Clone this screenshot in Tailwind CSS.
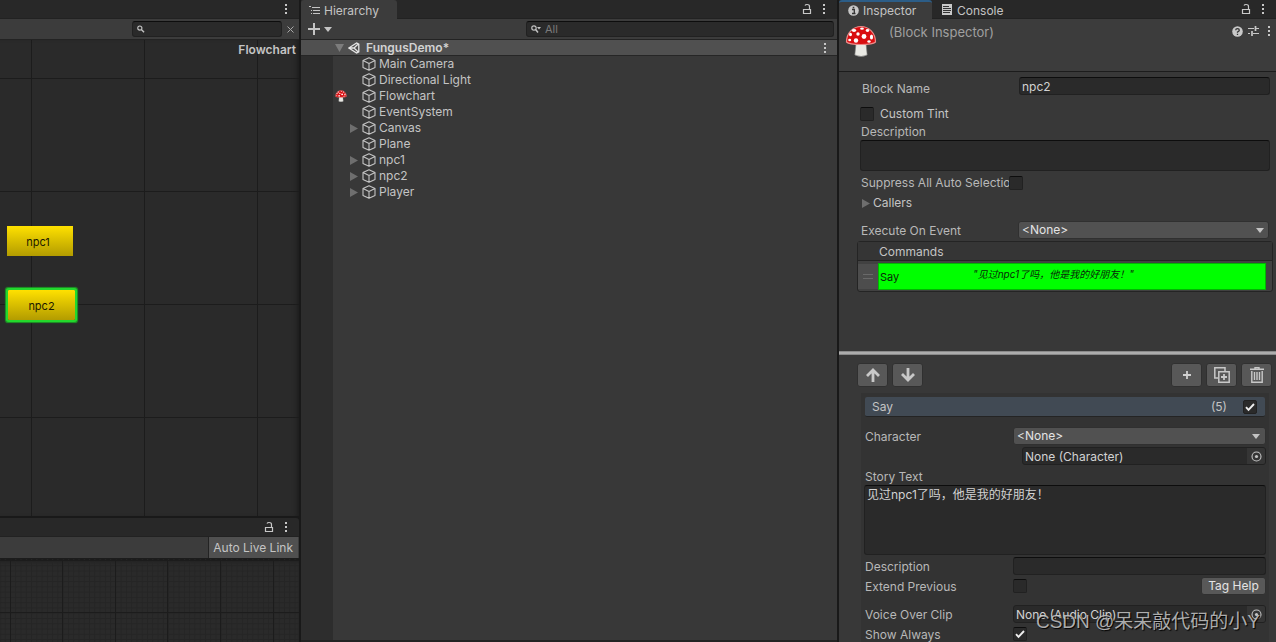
<!DOCTYPE html>
<html lang="en">
<head>
<meta charset="utf-8">
<title>FungusDemo</title>
<script src="https://cdn.jsdelivr.net/npm/@tailwindcss/browser@4"></script>
</head>
<body class="h-screen overflow-hidden bg-[#191919] font-['Inter','Noto_Sans_CJK_SC',sans-serif] text-[12px] leading-4 text-[#c4c4c4]">
<svg class="hidden">
  <symbol id="dots" viewBox="0 0 4 12"><path d="M1 1h2v2H1zM1 5h2v2H1zM1 9h2v2H1z" fill="#c8c8c8"/></symbol>
  <symbol id="lock" viewBox="0 0 10 12"><path d="M1.500 6.500h7v4h-7zM7.500 6V3.500Q7.500 1.500 5 1.500Q3.500 1.500 3 2.500" fill="none" stroke="#c8c8c8" stroke-width="1.200"/></symbol>
  <symbol id="cube" viewBox="0 0 14 14"><path d="M7 .8 13 3.600V10.400L7 13.300 1 10.400V3.600ZM1 3.600 7 6.500 13 3.600M7 6.500V13.300" fill="none" stroke="#c4c4c4" stroke-width="1.100" stroke-linejoin="round"/></symbol>
  <symbol id="right" viewBox="0 0 8 9"><path d="M0 0 8 4.500 0 9Z" fill="#6e6e6e"/></symbol>
  <symbol id="down" viewBox="0 0 8 5"><path d="M0 0H8L4 5Z" fill="#c4c4c4"/></symbol>
  <symbol id="mushroom" viewBox="0 0 32 32">
    <path d="M11 18h10l1.200 12q-6 3-12.400 0z" fill="#e9e9e4" stroke="#777" stroke-width=".6"/>
    <path d="M1.500 17C1.500 8 8 1.500 16 1.500S30.500 8 30.500 17Q28 19.500 16 19.500T1.500 17Z" fill="#d90d10" stroke="#ee8a88" stroke-width="1.200"/>
    <g fill="#fff"><ellipse cx="9" cy="5.500" rx="2.200" ry="1.400"/><ellipse cx="17" cy="3.700" rx="1.900" ry="1.100"/><ellipse cx="22.500" cy="5.500" rx="1.800" ry="1.400"/><circle cx="13" cy="9" r="1.700"/><circle cx="19" cy="11.500" r="2.400"/><ellipse cx="26.500" cy="12" rx="1.600" ry="2.500"/><ellipse cx="5.500" cy="9.500" rx="1.500" ry="1.800"/><circle cx="11" cy="15.500" r="2.200"/><ellipse cx="4.700" cy="15" rx="1.500" ry="1.300"/><ellipse cx="24" cy="16.500" rx="1.700" ry="1.200"/></g>
  </symbol>
  <symbol id="target" viewBox="0 0 11 11"><circle cx="5.500" cy="5.500" r="4.500" fill="none" stroke="#c4c4c4" stroke-width="1.100"/><circle cx="5.500" cy="5.500" r="1.600" fill="#c4c4c4"/></symbol>
  <symbol id="check" viewBox="0 0 14 14"><path d="M3 7.200 5.500 9.800 11 4" fill="none" stroke="#eee" stroke-width="1.900"/></symbol>
</svg>

<div class="grid h-full grid-cols-[299fr_536fr_437fr] gap-[2px]">

  <!-- Flowchart window and animator window -->
  <section class="flex min-w-0 flex-col">
    <header class="flex h-[19px] shrink-0 items-center justify-end border-b border-[#222] bg-[#282828] pr-[11px]">
      <button aria-label="Window menu"><svg class="h-3 w-1"><use href="#dots"/></svg></button>
    </header>
    <div class="flex h-[21px] shrink-0 items-center justify-end border-b border-[#232323] bg-[#3c3c3c] pr-[5px]">
      <label class="flex h-4 w-[150px] items-center rounded-[3px] border border-[#212121] border-t-[#0d0d0d] bg-[#2a2a2a] pl-1">
        <svg class="h-2 w-2" viewBox="0 0 8 8"><circle cx="3" cy="3" r="2.200" fill="none" stroke="#c4c4c4" stroke-width="1.200"/><path d="M4.600 4.600 7.500 7.500" stroke="#c4c4c4" stroke-width="1.500"/></svg>
        <input class="w-full min-w-0 bg-transparent px-1 outline-none" aria-label="Search blocks">
      </label>
      <button class="ml-[5px]" aria-label="Clear search"><svg class="h-[7px] w-[7px]" viewBox="0 0 7 7"><path d="M.5.5 6.500 6.500M6.500.5.5 6.500" stroke="#a8a8a8"/></svg></button>
    </div>
    <div class="relative min-h-0 flex-1 overflow-hidden bg-[#2a2a2a] bg-[linear-gradient(to_right,#1c1c1c_1px,transparent_1px),linear-gradient(to_bottom,#1c1c1c_1px,transparent_1px)] bg-[size:113px_113px] bg-[position:31px_38px] shadow-[inset_-5px_0_5px_-3px_#1d1d1d]">
      <h2 class="pt-[2px] pr-[3px] text-right font-semibold">Flowchart</h2>
      <div class="absolute top-[186px] left-[7px] flex h-[30px] w-[66px] items-center justify-center bg-linear-to-b from-[#ffe100] to-[#b39c00] pt-[2px] pr-1 text-[11px] text-[#1c1900]">npc1</div>
      <div class="absolute top-[250px] left-2 flex h-[30px] w-[67px] items-center justify-center rounded-[1px] bg-linear-to-b from-[#ffe100] to-[#b39c00] pt-[2px] text-[11px] text-[#1c1900] shadow-[0_0_0_2px_#23d82c,0_0_1px_3px_#1c9a25]">npc2</div>
    </div>
    <div class="h-[2px] shrink-0 bg-[#191919]"></div>
    <header class="flex h-[19px] shrink-0 items-center justify-end gap-[10px] rounded-tr-[3px] border-b border-[#222] bg-[#282828] pr-[11px]">
      <button aria-label="Lock"><svg class="h-3 w-[10px]"><use href="#lock"/></svg></button>
      <button aria-label="Window menu"><svg class="h-3 w-1"><use href="#dots"/></svg></button>
    </header>
    <div class="flex h-[22px] shrink-0 justify-end border-b border-[#1c1c1c] bg-[#3c3c3c] pr-px">
      <button class="border-l border-[#232323] bg-[#505050] pr-[5px] pl-1">Auto Live Link</button>
    </div>
    <div class="h-[83px] shrink-0 overflow-hidden bg-[#2a2a2a] shadow-[inset_0_4px_4px_-3px_#111]">
      <svg class="h-full w-full">
        <defs><pattern id="fine" x="10" y="1" width="5.270" height="5.270" patternUnits="userSpaceOnUse"><path d="M.5 0V5.270M0 .5H5.270" stroke="#252525"/></pattern></defs>
        <rect width="100%" height="100%" fill="url(#fine)"/>
        <path d="M10.500 0V90M62.500 0V90M115.500 0V90M167.500 0V90M220.500 0V90M273.500 0V90M0 1.500H320M0 53.500H320" stroke="#1c1c1c"/>
      </svg>
    </div>
  </section>

  <!-- Hierarchy window -->
  <section class="flex min-w-0 flex-col bg-[#383838]">
    <header class="flex h-[19px] shrink-0 items-center bg-[#282828] pr-[11px]">
      <div class="flex h-full w-24 items-center gap-1 rounded-t-[3px] bg-[#3c3c3c] pt-[2px] pl-2">
        <svg class="h-[9px] w-[11px]" viewBox="0 0 11 9"><path d="M0 .5h2M3 1.500h8M2 4.500h1M4 4.500h7M2 7.500h1M4 7.500h7" stroke="#c4c4c4"/></svg>
        <h2>Hierarchy</h2>
      </div>
      <div class="flex h-full flex-1 items-center justify-end gap-[10px] border-b border-[#222]">
        <button aria-label="Lock"><svg class="h-3 w-[10px]"><use href="#lock"/></svg></button>
        <button aria-label="Window menu"><svg class="h-3 w-1"><use href="#dots"/></svg></button>
      </div>
    </header>
    <div class="flex h-[21px] shrink-0 items-center border-b border-[#232323] bg-[#3c3c3c] pr-[3px] pl-[7px]">
      <button class="flex items-center gap-1" aria-label="Create">
        <svg class="h-3 w-3" viewBox="0 0 12 12"><path d="M6 0V12M0 6H12" stroke="#c4c4c4" stroke-width="2"/></svg>
        <svg class="h-[5px] w-2"><use href="#down"/></svg>
      </button>
      <label class="ml-auto flex h-4 w-[308px] items-center gap-1 rounded-[3px] border border-[#212121] border-t-[#0d0d0d] bg-[#2a2a2a] pl-1">
        <svg class="h-2 w-[10px] shrink-0" viewBox="0 0 10 8"><circle cx="3" cy="3" r="2.200" fill="none" stroke="#c4c4c4" stroke-width="1.200"/><path d="M4.600 4.600 7 7.500" stroke="#c4c4c4" stroke-width="1.500"/><path d="M6 2h4L8 4.500z" fill="#c4c4c4"/></svg>
        <input class="w-full min-w-0 bg-transparent text-[11px] outline-none placeholder:text-[#7a7a7a]" placeholder="All" aria-label="Search hierarchy">
      </label>
    </div>
    <div class="flex h-4 shrink-0 items-center border-b border-[#262626] bg-[#505050] pr-[10px] pl-[34px]">
      <svg class="h-2 w-[9px]" viewBox="0 0 9 8"><path d="M0 0H9L4.500 8Z" fill="#7c7c7c"/></svg>
      <svg class="ml-1 h-3 w-3" viewBox="0 0 12 12"><path d="M.8 6 8.600 1 10.800 2.200V9.800L8.600 11ZM.8 6H6M6 6 10.500 1.800M6 6 10.500 10.200" fill="none" stroke="#e6e6e6" stroke-width="1.300"/></svg>
      <h3 class="ml-[6px] font-semibold text-[#d2d2d2]">FungusDemo*</h3>
      <button class="ml-auto" aria-label="Scene menu"><svg class="h-3 w-1"><use href="#dots"/></svg></button>
    </div>
    <div class="min-h-0 flex-1 border-b-2 border-[#232323] bg-linear-to-r from-[#2d2d2d] from-[32px] to-[#383838] to-[32px]">
      <ul>
        <li class="flex h-4 items-center gap-[3px] pl-[61px]"><svg class="h-[14px] w-[14px]"><use href="#cube"/></svg>Main Camera</li>
        <li class="flex h-4 items-center gap-[3px] pl-[61px]"><svg class="h-[14px] w-[14px]"><use href="#cube"/></svg>Directional Light</li>
        <li class="flex h-4 items-center gap-[3px] pl-[34px]"><svg class="mr-3 h-3 w-3"><use href="#mushroom"/></svg><svg class="h-[14px] w-[14px]"><use href="#cube"/></svg>Flowchart</li>
        <li class="flex h-4 items-center gap-[3px] pl-[61px]"><svg class="h-[14px] w-[14px]"><use href="#cube"/></svg>EventSystem</li>
        <li class="flex h-4 items-center gap-[3px] pl-[49px]"><svg class="mr-px h-[9px] w-2"><use href="#right"/></svg><svg class="h-[14px] w-[14px]"><use href="#cube"/></svg>Canvas</li>
        <li class="flex h-4 items-center gap-[3px] pl-[61px]"><svg class="h-[14px] w-[14px]"><use href="#cube"/></svg>Plane</li>
        <li class="flex h-4 items-center gap-[3px] pl-[49px]"><svg class="mr-px h-[9px] w-2"><use href="#right"/></svg><svg class="h-[14px] w-[14px]"><use href="#cube"/></svg>npc1</li>
        <li class="flex h-4 items-center gap-[3px] pl-[49px]"><svg class="mr-px h-[9px] w-2"><use href="#right"/></svg><svg class="h-[14px] w-[14px]"><use href="#cube"/></svg>npc2</li>
        <li class="flex h-4 items-center gap-[3px] pl-[49px]"><svg class="mr-px h-[9px] w-2"><use href="#right"/></svg><svg class="h-[14px] w-[14px]"><use href="#cube"/></svg>Player</li>
      </ul>
    </div>
  </section>

  <!-- Inspector window -->
  <section class="relative flex min-w-0 flex-col overflow-hidden bg-[#383838]">
    <header class="flex h-[19px] shrink-0 items-center bg-[#282828]">
      <div class="flex h-full w-[93px] items-center gap-1 rounded-t-[3px] border-t-2 border-[#2c5d87] bg-[#3c3c3c] pl-[9px]">
        <svg class="h-[11px] w-[11px]" viewBox="0 0 11 11"><circle cx="5.500" cy="5.500" r="5.300" fill="#c8c8c8"/><path d="M4 4.500h2.300V8.500M4 8.500h3.500M4.700 2.500h1.600" stroke="#333" stroke-width="1.300" fill="none"/></svg>
        <h2>Inspector</h2>
      </div>
      <div class="flex h-full flex-1 items-center gap-[5px] border-b border-[#222] pr-[11px] pl-[10px]">
        <svg class="h-[11px] w-[10px]" viewBox="0 0 10 11"><path d="M0 0h10v11H0z" fill="#c8c8c8"/><path d="M1 2.500h6M1 4.500h8M1 6.500h8M1 8.500h7" stroke="#333"/></svg>
        <span class="pt-[3px]">Console</span>
        <button class="ml-auto" aria-label="Lock"><svg class="h-3 w-[10px]"><use href="#lock"/></svg></button>
        <button class="ml-[5px]" aria-label="Window menu"><svg class="h-3 w-1"><use href="#dots"/></svg></button>
      </div>
    </header>
    <div class="flex h-[53px] shrink-0 items-start border-b border-[#1c1c1c] bg-[#3c3c3c] pt-[6px] pr-[5px] pl-[6px]">
      <svg class="h-8 w-8"><use href="#mushroom"/></svg>
      <h3 class="ml-3 text-[13px] leading-[15px] text-[#a0a0a0]">(Block Inspector)</h3>
      <div class="ml-auto flex items-center">
        <button aria-label="Help"><svg class="h-[11px] w-[11px]" viewBox="0 0 11 11"><circle cx="5.500" cy="5.500" r="5.300" fill="#c8c8c8"/><path d="M3.700 4.200Q3.700 2.700 5.500 2.700T7.300 4.200Q7.300 5 5.500 6V6.800M5.500 7.800V9" stroke="#333" stroke-width="1.300" fill="none"/></svg></button>
        <button class="ml-[5px]" aria-label="Presets"><svg class="h-[10px] w-[11px]" viewBox="0 0 11 10"><path d="M0 2.500h6M8 2.500h3M0 7.500h2M5 7.500h6" stroke="#c8c8c8" stroke-width="1.200"/><path d="M7.500 0V5M4 5V10" stroke="#c8c8c8" stroke-width="1.700"/></svg></button>
        <button class="ml-2" aria-label="Component menu"><svg class="h-3 w-1"><use href="#dots"/></svg></button>
      </div>
    </div>

    <div class="flex h-[279px] shrink-0 flex-col pt-[5px] pr-[6px] pl-[21px]">
      <div class="flex h-[18px] items-center">
        <label for="bname" class="w-[159px] shrink-0 pt-[6px] pl-[2px] text-[#b8b8b8]">Block Name</label>
        <input id="bname" value="npc2" class="h-[18px] min-w-0 flex-1 rounded-[3px] border border-[#212121] border-t-[#0d0d0d] bg-[#2a2a2a] px-[2px] text-[#d2d2d2]">
      </div>
      <div class="mt-[11px] flex h-4 items-center gap-[6px]">
        <input id="tint" type="checkbox" class="h-[14px] w-[14px] appearance-none rounded-[2px] border border-[#212121] border-t-[#0d0d0d] bg-[#2a2a2a]">
        <label for="tint">Custom Tint</label>
      </div>
      <label for="bdesc" class="mt-[2px] pl-px text-[#b8b8b8]">Description</label>
      <textarea id="bdesc" class="h-[31px] shrink-0 resize-none rounded-[3px] border border-[#212121] border-t-[#0d0d0d] bg-[#2a2a2a]"></textarea>
      <div class="mt-1 flex h-4 items-center">
        <label for="supp" class="w-[147px] pl-px whitespace-nowrap text-[#b8b8b8]">Suppress All Auto Selectio</label>
        <input id="supp" type="checkbox" class="ml-[2px] h-[14px] w-[14px] appearance-none rounded-[2px] border border-[#212121] border-t-[#0d0d0d] bg-[#2a2a2a]">
      </div>
      <button class="mt-1 flex items-center gap-[3px] self-start pl-[2px]"><svg class="h-[9px] w-2"><use href="#right"/></svg>Callers</button>
      <div class="mt-[10px] flex h-[18px] shrink-0 items-center">
        <label for="exec" class="w-[158px] shrink-0 pt-[2px] pl-px text-[#b8b8b8]">Execute On Event</label>
        <div class="relative mr-px flex-1">
          <select id="exec" class="block h-[18px] w-full appearance-none rounded-[3px] border border-[#303030] bg-[#515151] pl-[3px] text-[#e4e4e4]"><option>&lt;None&gt;</option></select>
          <svg class="pointer-events-none absolute top-[7px] right-[5px] h-[5px] w-2"><use href="#down"/></svg>
        </div>
      </div>
      <div class="mt-[2px] -mr-[3px] -ml-[3px] shrink-0 rounded-[3px] border border-[#242424] bg-[#414141]">
        <h4 class="h-[19px] border-b border-[#242424] bg-[#353535] pt-[2px] pl-[21px]">Commands</h4>
        <div class="flex h-[30px] pt-[2px] pr-[6px] pb-px">
          <div class="my-px flex w-5 items-center justify-center bg-[#4d4d4d]"><svg class="h-[5px] w-[10px]" viewBox="0 0 10 5"><path d="M0 .5h10M0 4.500h10" stroke="#696969"/></svg></div>
          <div class="flex flex-1 border border-[#00b800] bg-[#00ff00] text-[11px] text-[#0a260a]">
            <span class="w-[94px] pt-[5px] pl-px">Say</span>
            <span class="pt-[2px] text-[10px] italic">"见过npc1了吗，他是我的好朋友！"</span>
          </div>
        </div>
      </div>
    </div>

    <div class="h-1 shrink-0 border-y border-[#8a8a8a] bg-[#adadad]"></div>

    <div class="flex shrink-0 gap-1 pt-2 pr-1 pl-[18px]">
      <button aria-label="Move up" class="flex h-6 w-[31px] items-center justify-center rounded-[3px] border border-[#303030] bg-[#585858]"><svg class="h-[14px] w-[14px]" viewBox="0 0 14 14"><path d="M7 14V2M1 8 7 2 13 8" fill="none" stroke="#c8c8c8" stroke-width="2.800"/></svg></button>
      <button aria-label="Move down" class="flex h-6 w-[31px] items-center justify-center rounded-[3px] border border-[#303030] bg-[#585858]"><svg class="h-[14px] w-[14px]" viewBox="0 0 14 14"><path d="M7 0V12M1 6 7 12 13 6" fill="none" stroke="#c8c8c8" stroke-width="2.800"/></svg></button>
      <button aria-label="Add command" class="ml-auto flex h-6 w-[31px] items-center justify-center rounded-[3px] border border-[#303030] bg-[#585858]"><svg class="h-2 w-2" viewBox="0 0 8 8"><path d="M4 0V8M0 4H8" stroke="#d0d0d0" stroke-width="1.800"/></svg></button>
      <button aria-label="Duplicate command" class="flex h-6 w-[31px] items-center justify-center rounded-[3px] border border-[#303030] bg-[#585858]"><svg class="h-4 w-4" viewBox="0 0 16 16"><path d="M4 11H.8V.8H11V4M4.800 4.800H15.200V15.200H4.800Z" fill="none" stroke="#c8c8c8" stroke-width="1.500"/><path d="M10 7V13M7 10H13" stroke="#c8c8c8" stroke-width="1.800"/></svg></button>
      <button aria-label="Delete command" class="flex h-6 w-[31px] items-center justify-center rounded-[3px] border border-[#303030] bg-[#585858]"><svg class="h-4 w-[14px]" viewBox="0 0 14 16"><path d="M0 2.200H14M5 1.500V.6H9V1.500M1.800 4V15.200H12.200V4M4.500 5V13M7 5V13M9.500 5V13" fill="none" stroke="#c8c8c8" stroke-width="1.400"/></svg></button>
    </div>

    <div class="mt-[6px] mr-[7px] ml-[22px] flex min-h-0 flex-1 flex-col bg-[#333] px-[3px] pt-1">
      <div class="mx-px flex h-5 shrink-0 items-center rounded-[2px] border-b border-[#242424] bg-[#414a54] pr-2 pl-[7px]">
        <h4 class="pt-px">Say</h4>
        <span class="ml-auto pt-px">(5)</span>
        <span class="relative ml-4 h-[14px] w-[14px]">
          <input type="checkbox" checked aria-label="Command enabled" class="block h-[14px] w-[14px] appearance-none rounded-[2px] border border-[#212121] bg-[#2a2a2a]">
          <svg class="pointer-events-none absolute inset-0 h-[14px] w-[14px]"><use href="#check"/></svg>
        </span>
      </div>
      <div class="mt-[10px] flex h-[18px] shrink-0 items-center">
        <label for="char" class="w-[149px] shrink-0 pt-[2px] pl-px text-[#b8b8b8]">Character</label>
        <div class="relative flex-1">
          <select id="char" class="block h-[18px] w-full appearance-none rounded-[3px] border border-[#303030] bg-[#515151] pl-[3px] text-[#e4e4e4]"><option>&lt;None&gt;</option></select>
          <svg class="pointer-events-none absolute top-[7px] right-[6px] h-[5px] w-2"><use href="#down"/></svg>
        </div>
      </div>
      <div class="mt-[2px] ml-[158px] flex h-[18px] shrink-0 items-stretch overflow-hidden rounded-[3px] border border-[#212121] bg-[#2a2a2a]">
        <input aria-label="Character object" readonly value="None (Character)" class="min-w-0 flex-1 bg-transparent pt-px pl-[2px] text-[#d2d2d2]">
        <button aria-label="Pick character" class="flex w-[18px] items-center justify-center bg-[#353535]"><svg class="h-[11px] w-[11px]"><use href="#target"/></svg></button>
      </div>
      <label for="story" class="mt-1 pl-px text-[#b8b8b8]">Story Text</label>
      <textarea id="story" class="h-[70px] shrink-0 resize-none rounded-[3px] border border-[#212121] border-t-[#0d0d0d] bg-[#2a2a2a] px-[2px] pt-px text-[#d2d2d2]">见过npc1了吗，他是我的好朋友！</textarea>
      <div class="mt-[2px] flex h-[18px] shrink-0 items-center">
        <label for="sdesc" class="w-[149px] shrink-0 pt-[2px] pl-px text-[#b8b8b8]">Description</label>
        <input id="sdesc" class="h-[18px] min-w-0 flex-1 rounded-[3px] border border-[#212121] border-t-[#0d0d0d] bg-[#2a2a2a]">
      </div>
      <div class="mt-[2px] flex h-[18px] shrink-0 items-center">
        <label for="ext" class="w-[149px] shrink-0 pt-[2px] pl-px text-[#b8b8b8]">Extend Previous</label>
        <input id="ext" type="checkbox" class="h-[14px] w-[14px] appearance-none rounded-[2px] border border-[#212121] border-t-[#0d0d0d] bg-[#2a2a2a]">
        <button class="ml-auto h-[18px] w-[65px] rounded-[3px] border border-[#303030] bg-[#585858] text-[#e4e4e4]">Tag Help</button>
      </div>
      <div class="mt-[10px] flex h-[18px] shrink-0 items-center">
        <label for="clip" class="w-[149px] shrink-0 pt-[2px] pl-px text-[#b8b8b8]">Voice Over Clip</label>
        <div class="flex h-[18px] flex-1 items-stretch overflow-hidden rounded-[3px] border border-[#212121] bg-[#2a2a2a]">
          <input id="clip" readonly value="None (Audio Clip)" class="min-w-0 flex-1 bg-transparent pt-px pl-[2px] text-[#d2d2d2]">
          <button aria-label="Pick audio clip" class="flex w-[18px] items-center justify-center bg-[#353535]"><svg class="h-[11px] w-[11px]"><use href="#target"/></svg></button>
        </div>
      </div>
      <div class="mt-[2px] flex h-[18px] shrink-0 items-center">
        <label for="always" class="w-[149px] shrink-0 pt-[2px] pl-px text-[#b8b8b8]">Show Always</label>
        <span class="relative h-[14px] w-[14px]">
          <input id="always" type="checkbox" checked class="block h-[14px] w-[14px] appearance-none rounded-[2px] border border-[#212121] border-t-[#0d0d0d] bg-[#2a2a2a]">
          <svg class="pointer-events-none absolute inset-0 h-[14px] w-[14px]"><use href="#check"/></svg>
        </span>
      </div>
    </div>
    <p class="pointer-events-none absolute right-4 bottom-2 font-['Liberation_Sans','Noto_Sans_CJK_SC',sans-serif] text-[19px] leading-6 whitespace-nowrap text-[#c8c8c8]/85 [text-shadow:1px_1px_1px_#000]">CSDN @呆呆敲代码的小Y</p>
  </section>
</div>
</body>
</html>
